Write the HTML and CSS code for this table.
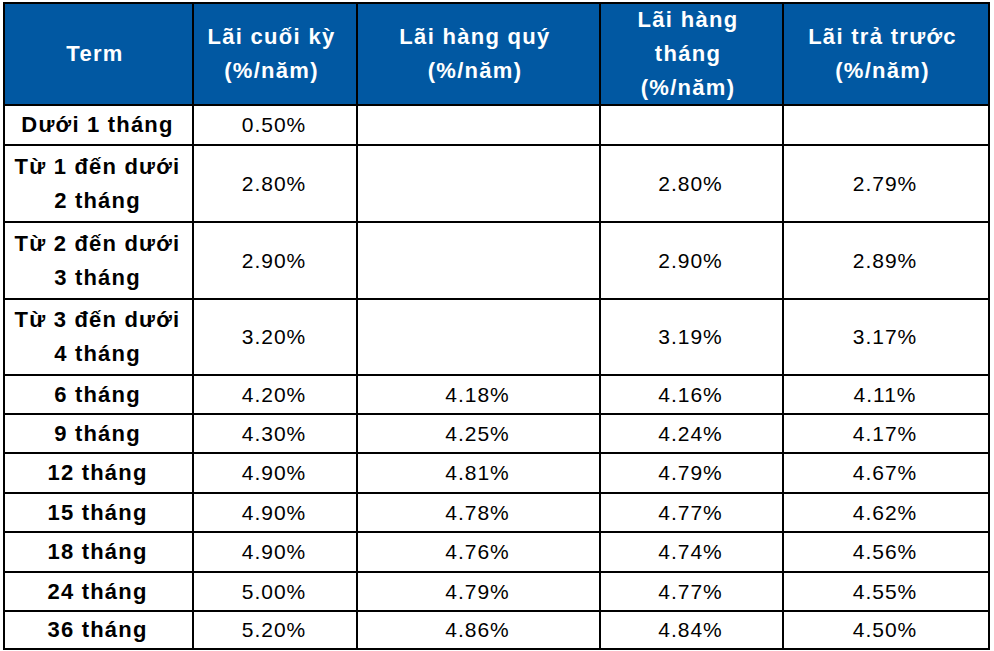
FILE: index.html
```html
<!DOCTYPE html>
<html lang="vi">
<head>
<meta charset="utf-8">
<title>Lãi suất</title>
<link rel="stylesheet" href="styles.css">
</head>
<body>
<div class="rates">
  <div class="cell head">Term</div>
  <div class="cell head">Lãi cuối kỳ<br>(%/năm)</div>
  <div class="cell head">Lãi hàng quý<br>(%/năm)</div>
  <div class="cell head">Lãi hàng<br>tháng<br>(%/năm)</div>
  <div class="cell head">Lãi trả trước<br>(%/năm)</div>

  <div class="cell term">Dưới 1 tháng</div>
  <div class="cell num">0.50%</div>
  <div class="cell num"></div>
  <div class="cell num"></div>
  <div class="cell num"></div>

  <div class="cell term">Từ 1 đến dưới<br>2 tháng</div>
  <div class="cell num">2.80%</div>
  <div class="cell num"></div>
  <div class="cell num">2.80%</div>
  <div class="cell num">2.79%</div>

  <div class="cell term">Từ 2 đến dưới<br>3 tháng</div>
  <div class="cell num">2.90%</div>
  <div class="cell num"></div>
  <div class="cell num">2.90%</div>
  <div class="cell num">2.89%</div>

  <div class="cell term">Từ 3 đến dưới<br>4 tháng</div>
  <div class="cell num">3.20%</div>
  <div class="cell num"></div>
  <div class="cell num">3.19%</div>
  <div class="cell num">3.17%</div>

  <div class="cell term">6 tháng</div>
  <div class="cell num">4.20%</div>
  <div class="cell num">4.18%</div>
  <div class="cell num">4.16%</div>
  <div class="cell num">4.11%</div>

  <div class="cell term">9 tháng</div>
  <div class="cell num">4.30%</div>
  <div class="cell num">4.25%</div>
  <div class="cell num">4.24%</div>
  <div class="cell num">4.17%</div>

  <div class="cell term">12 tháng</div>
  <div class="cell num">4.90%</div>
  <div class="cell num">4.81%</div>
  <div class="cell num">4.79%</div>
  <div class="cell num">4.67%</div>

  <div class="cell term">15 tháng</div>
  <div class="cell num">4.90%</div>
  <div class="cell num">4.78%</div>
  <div class="cell num">4.77%</div>
  <div class="cell num">4.62%</div>

  <div class="cell term">18 tháng</div>
  <div class="cell num">4.90%</div>
  <div class="cell num">4.76%</div>
  <div class="cell num">4.74%</div>
  <div class="cell num">4.56%</div>

  <div class="cell term">24 tháng</div>
  <div class="cell num">5.00%</div>
  <div class="cell num">4.79%</div>
  <div class="cell num">4.77%</div>
  <div class="cell num">4.55%</div>

  <div class="cell term">36 tháng</div>
  <div class="cell num">5.20%</div>
  <div class="cell num">4.86%</div>
  <div class="cell num">4.84%</div>
  <div class="cell num">4.50%</div>
</div>
</body>
</html>
```

FILE: styles.css
```css
html, body {
  margin: 0;
  padding: 0;
  background: #ffffff;
}

body {
  font-family: "Liberation Sans", Arial, sans-serif;
  color: #000000;
}

.rates {
  display: grid;
  grid-template-columns: 187px 162px 241px 181px 204px;
  grid-template-rows: 100px 38px 75px 75px 74px 37px 37px 38px 37px 38px 37px 36px;
  gap: 2px;
  padding: 2px;
  background: #000000;
  width: max-content;
  margin: 2px 0 0 3px;
}

.cell {
  display: flex;
  align-items: center;
  justify-content: center;
  text-align: center;
  background: #ffffff;
  font-size: 21px;
  line-height: 34px;
}

.head {
  background: #0158a2;
  color: #ffffff;
  font-size: 22px;
  font-weight: bold;
  letter-spacing: 1.3px;
  padding-right: 7px;
}

.term {
  font-size: 22px;
  font-weight: bold;
  letter-spacing: 1.2px;
  padding-right: 2px;
}

.num {
  letter-spacing: 1px;
  padding-right: 2px;
}
```
